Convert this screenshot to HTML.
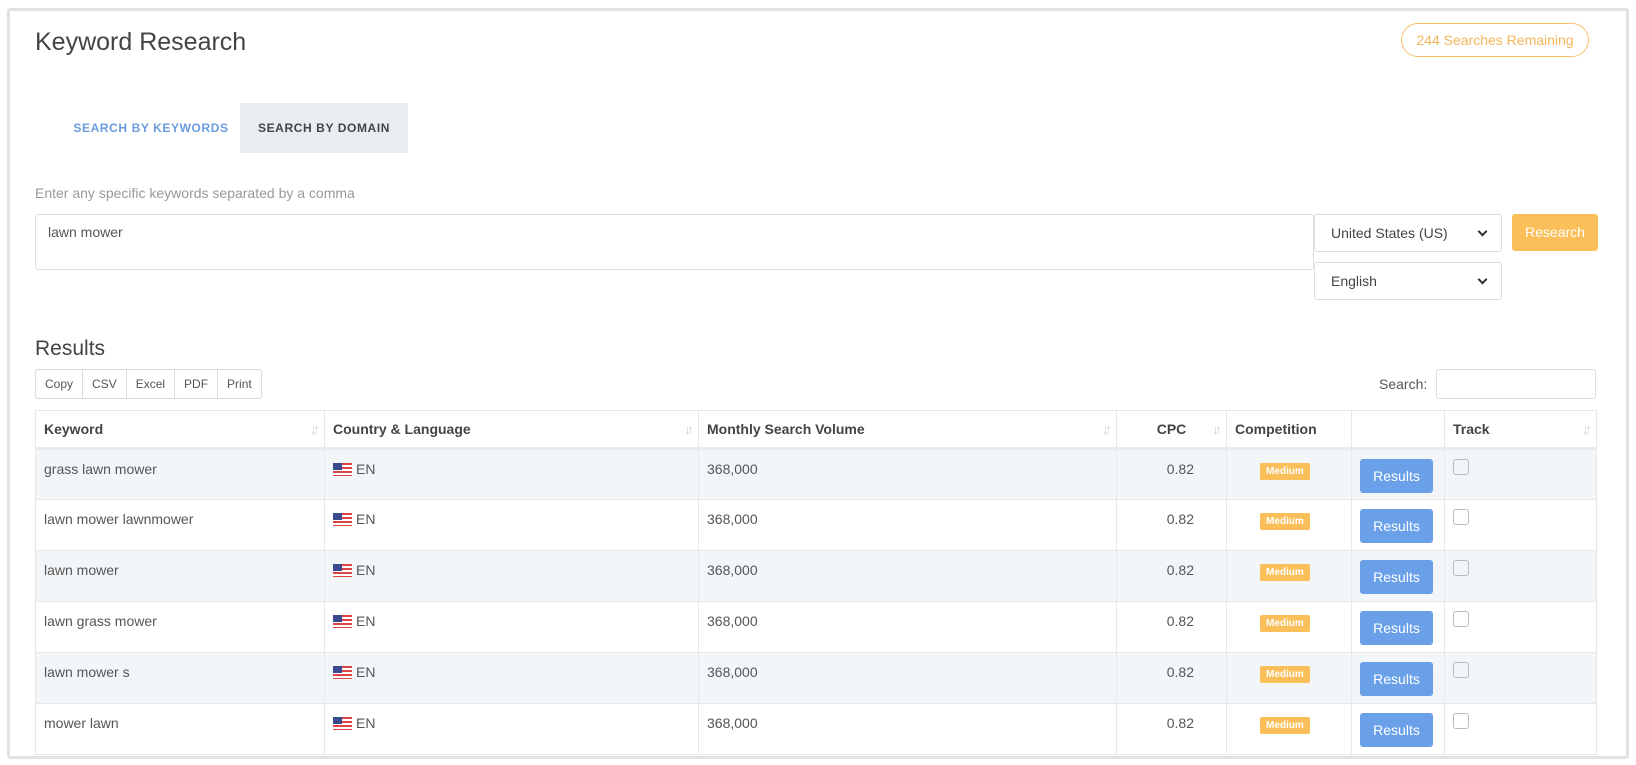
<!DOCTYPE html>
<html><head><meta charset="utf-8"><style>
*{box-sizing:border-box;margin:0;padding:0}
body{width:1636px;height:765px;background:#fff;font-family:"Liberation Sans",sans-serif;color:#555;position:relative;overflow:hidden}
.card{position:absolute;left:7px;top:8px;width:1622px;height:751px;border:3px solid #e2e2e2;border-radius:3px;overflow:hidden}
.abs{position:absolute}
h1{position:absolute;left:25px;top:17px;font-size:25px;font-weight:normal;color:#444}
.badge{left:1391px;top:12px;width:188px;height:34px;border:1px solid #f7c067;border-radius:17px;color:#f5b55a;font-size:14px;text-align:center;line-height:32px}
.tab{top:92px;height:50px;line-height:50px;font-size:12px;font-weight:bold;letter-spacing:.6px;text-align:center}
.lbl{left:25px;top:174px;font-size:14px;color:#999}
.ta{left:25px;top:203px;width:1279px;height:56px;border:1px solid #ddd;border-radius:3px;padding:9px 12px;font-size:14px;color:#555}
.sel{left:1304px;width:188px;height:38px;border:1px solid #ddd;border-radius:3px;font-size:14px;line-height:36px;padding-left:16px;color:#444}
.sel:after{content:"";position:absolute;right:15px;top:13px;width:5px;height:5px;border-right:2px solid #333;border-bottom:2px solid #333;transform:rotate(45deg)}
.btn{left:1502px;top:203px;width:86px;height:37px;background:#fbbf5a;border-radius:3px;color:#fff;font-size:14px;text-align:center;line-height:37px}
.res{left:25px;top:326px;font-size:21px;color:#444}
.bg{left:25px;top:358px;height:30px;border:1px solid #ddd;border-radius:3px;display:flex;font-size:12px}
.bg div{padding:0 9px;line-height:28px;border-right:1px solid #ddd}
.bg div:last-child{border-right:0}
.srch{left:1369px;top:365px;font-size:14px}
.sbox{left:1426px;top:358px;width:160px;height:30px;border:1px solid #ddd;border-radius:3px}
table{position:absolute;left:25px;top:399px;width:1561px;border-collapse:collapse;font-size:14px;table-layout:fixed}
th,td{border:1px solid #e8e8e8;text-align:left;vertical-align:top}
th{height:38px;font-weight:bold;color:#444;padding:10px 8px;position:relative;border-bottom:3px solid #e8ecef}
th .s{position:absolute;right:8px;top:10px;color:#d0d0d0;font-size:14px;letter-spacing:-4px;font-weight:bold}
td{height:51px;padding:11px 8px 0}
tr.o td{background:#f3f6f9}
.flag{display:inline-block;width:19px;height:13px;vertical-align:-2px;margin-right:4px;background:repeating-linear-gradient(#d44 0 2px,#fff 2px 4px);position:relative}
.flag:before{content:"";position:absolute;left:0;top:0;width:9px;height:7px;background:#3b4a8c}
.med{display:inline-block;background:#fbbf5a;color:#fff;font-size:10px;font-weight:bold;padding:3px 6px;border-radius:2px;margin-left:25px}
.rb{display:inline-block;background:#6aa0e8;color:#fff;font-size:14px;width:73px;height:34px;line-height:34px;text-align:center;border-radius:3px;margin-top:-2px}
.cb{display:inline-block;width:16px;height:16px;border:1px solid #bbb;border-radius:3px;margin-top:-2px}
</style></head><body>
<div class="card">
<h1>Keyword Research</h1>
<div class="abs badge">244 Searches Remaining</div>
<div class="abs tab" style="left:51px;width:180px;color:#6b9be0">SEARCH BY KEYWORDS</div>
<div class="abs tab" style="left:230px;width:168px;background:#eaedf0;color:#444">SEARCH BY DOMAIN</div>
<div class="abs lbl">Enter any specific keywords separated by a comma</div>
<div class="abs ta">lawn mower</div>
<div class="abs sel" style="top:203px">United States (US)</div>
<div class="abs sel" style="top:251px">English</div>
<div class="abs btn">Research</div>
<div class="abs res">Results</div>
<div class="abs bg"><div>Copy</div><div>CSV</div><div>Excel</div><div>PDF</div><div>Print</div></div>
<div class="abs srch">Search:</div>
<div class="abs sbox"></div>
<table>
<colgroup><col style="width:289px"><col style="width:374px"><col style="width:418px"><col style="width:110px"><col style="width:125px"><col style="width:93px"><col style="width:152px"></colgroup>
<tr><th>Keyword<span class="s">↓↑</span></th><th>Country &amp; Language<span class="s">↓↑</span></th><th>Monthly Search Volume<span class="s">↓↑</span></th><th style="text-align:center">CPC<span class="s">↓↑</span></th><th>Competition</th><th></th><th>Track<span class="s">↓↑</span></th></tr>
<tr class="o"><td>grass lawn mower</td><td><span class="flag"></span>EN</td><td>368,000</td><td style="text-align:right;padding-right:32px">0.82</td><td><span class="med">Medium</span></td><td><span class="rb">Results</span></td><td><span class="cb"></span></td></tr>
<tr><td>lawn mower lawnmower</td><td><span class="flag"></span>EN</td><td>368,000</td><td style="text-align:right;padding-right:32px">0.82</td><td><span class="med">Medium</span></td><td><span class="rb">Results</span></td><td><span class="cb"></span></td></tr>
<tr class="o"><td>lawn mower</td><td><span class="flag"></span>EN</td><td>368,000</td><td style="text-align:right;padding-right:32px">0.82</td><td><span class="med">Medium</span></td><td><span class="rb">Results</span></td><td><span class="cb"></span></td></tr>
<tr><td>lawn grass mower</td><td><span class="flag"></span>EN</td><td>368,000</td><td style="text-align:right;padding-right:32px">0.82</td><td><span class="med">Medium</span></td><td><span class="rb">Results</span></td><td><span class="cb"></span></td></tr>
<tr class="o"><td>lawn mower s</td><td><span class="flag"></span>EN</td><td>368,000</td><td style="text-align:right;padding-right:32px">0.82</td><td><span class="med">Medium</span></td><td><span class="rb">Results</span></td><td><span class="cb"></span></td></tr>
<tr><td>mower lawn</td><td><span class="flag"></span>EN</td><td>368,000</td><td style="text-align:right;padding-right:32px">0.82</td><td><span class="med">Medium</span></td><td><span class="rb">Results</span></td><td><span class="cb"></span></td></tr>
</table>
</div>
</body></html>
